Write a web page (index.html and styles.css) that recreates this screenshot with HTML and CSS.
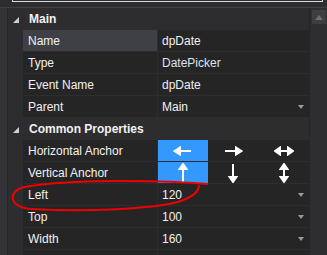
FILE: index.html
```html
<!DOCTYPE html>
<html lang="en">
<head>
  <meta charset="UTF-8" />
  <title>Properties</title>
  <link rel="stylesheet" href="styles.css">
</head>
<body>
  <div class="search-strip">
    <div class="search-box"></div>
  </div>

  <main class="panel">
    <div class="gutter"></div>

    <section class="grid">
      <div class="category">
        <svg class="expander" width="6" height="6" viewBox="0 0 6 6"><polygon points="6,0 6,6 0,6" /></svg>
        Main
      </div>
      <div class="row selected">
        <div class="label">Name</div>
        <div class="value">dpDate</div>
      </div>
      <div class="row">
        <div class="label">Type</div>
        <div class="value readonly">DatePicker</div>
      </div>
      <div class="row">
        <div class="label">Event Name</div>
        <div class="value">dpDate</div>
      </div>
      <div class="row">
        <div class="label">Parent</div>
        <div class="value">Main <span class="drop"></span></div>
      </div>

      <div class="category">
        <svg class="expander" width="6" height="6" viewBox="0 0 6 6"><polygon points="6,0 6,6 0,6" /></svg>
        Common Properties
      </div>
      <div class="row">
        <div class="label">Horizontal Anchor</div>
        <div class="value anchors">
          <div class="anchor active">
            <svg width="20" height="10" viewBox="0 0 20 10"><path d="M5 5 H18" /><polygon points="1.5,5 7,1.5 7,8.5" /></svg>
          </div>
          <div class="anchor">
            <svg width="20" height="10" viewBox="0 0 20 10"><path d="M2 5 H15" /><polygon points="18.5,5 13,1.5 13,8.5" /></svg>
          </div>
          <div class="anchor">
            <svg width="20" height="10" viewBox="0 0 20 10"><path d="M5 5 H15" /><polygon points="1,5 6,1.5 6,8.5" /><polygon points="19,5 14,1.5 14,8.5" /></svg>
          </div>
        </div>
      </div>
      <div class="row">
        <div class="label">Vertical Anchor</div>
        <div class="value anchors">
          <div class="anchor active">
            <svg width="10" height="20" viewBox="0 0 10 20"><path d="M5 5 V19" /><polygon points="5,1 1.5,6 8.5,6" /></svg>
          </div>
          <div class="anchor">
            <svg width="10" height="20" viewBox="0 0 10 20"><path d="M5 1 V15" /><polygon points="5,19 1.5,14 8.5,14" /></svg>
          </div>
          <div class="anchor">
            <svg width="10" height="20" viewBox="0 0 10 20"><path d="M5 5 V15" /><polygon points="5,1 1.5,6 8.5,6" /><polygon points="5,19 1.5,14 8.5,14" /></svg>
          </div>
        </div>
      </div>
      <div class="row">
        <div class="label">Left</div>
        <div class="value">120 <span class="drop"></span></div>
      </div>
      <div class="row">
        <div class="label">Top</div>
        <div class="value">100 <span class="drop"></span></div>
      </div>
      <div class="row">
        <div class="label">Width</div>
        <div class="value">160 <span class="drop"></span></div>
      </div>
      <div class="row">
        <div class="label"></div>
        <div class="value"></div>
      </div>
    </section>

    <aside class="scrollbar">
      <div class="scroll-up">
        <svg width="8" height="5" viewBox="0 0 8 5"><polygon points="4,0 8,5 0,5" /></svg>
      </div>
    </aside>
  </main>

  <svg class="scribble" width="327" height="255" viewBox="0 0 327 255">
    <path d="M208 184 C160 180 70 179 24 187 C8 191 8 206 30 209 C90 212 150 209 178 202 C193 197 199 192 199 185" />
  </svg>
</body>
</html>
```

FILE: styles.css
```css
* {
  box-sizing: border-box;
}

body {
  margin: 0;
  width: 327px;
  height: 255px;
  overflow: hidden;
  position: relative;
  background: #2d2d30;
  color: #f1f1f1;
  font-family: "Liberation Sans", Arial, sans-serif;
  font-size: 12px;
}

.search-strip {
  height: 8px;
  padding: 0 4px 0 12px;
  border-bottom: 1px solid #3f3f46;
}

.search-box {
  height: 2px;
  border: 1px solid #d8d8d8;
  border-top: none;
  background: #2d2d30;
}

.panel {
  display: flex;
  height: 247px;
  overflow: hidden;
}

.gutter {
  width: 8px;
  background: #333337;
  border-right: 1px solid #252526;
}

.grid {
  flex: 1;
  overflow: hidden;
  background: #2d2d30;
  border-right: 1px solid #252526;
}

.category {
  height: 22px;
  display: flex;
  align-items: center;
  padding-left: 5px;
  font-weight: bold;
}

.expander {
  fill: #d0d0d0;
  margin-right: 10px;
  margin-top: 1px;
}

.row {
  display: flex;
  height: 22px;
  margin-left: 15px;
  border-bottom: 1px solid #2d2d30;
}

.label {
  width: 135px;
  padding-left: 5px;
  display: flex;
  align-items: center;
  background: #252526;
  border-right: 1px solid #2d2d30;
}

.selected .label {
  background: #3f3f46;
}

.value {
  flex: 1;
  display: flex;
  align-items: center;
  padding-left: 4px;
  padding-right: 5px;
  background: #252526;
}

.readonly {
  color: #dde3ea;
}

.drop {
  margin-left: auto;
  width: 0;
  height: 0;
  border-left: 3px solid transparent;
  border-right: 3px solid transparent;
  border-top: 4px solid #9a9a9a;
}

.anchors {
  display: grid;
  grid-template-columns: repeat(3, 1fr);
  padding: 0;
  align-items: stretch;
}

.anchor {
  display: flex;
  align-items: center;
  justify-content: center;
}

.anchor.active {
  background: #3399ff;
}

.anchor svg {
  stroke: #ffffff;
  stroke-width: 2;
  fill: #ffffff;
}

.scrollbar {
  width: 17px;
  background: #2e2e31;
  padding: 2px 1px 0 2px;
}

.scroll-up {
  height: 14px;
  background: #3e3e42;
  display: flex;
  align-items: center;
  justify-content: center;
}

.scroll-up svg {
  fill: #6e6e72;
}

.scribble {
  position: absolute;
  left: 0;
  top: 0;
  pointer-events: none;
}

.scribble path {
  fill: none;
  stroke: #ee0000;
  stroke-width: 2;
}
```
